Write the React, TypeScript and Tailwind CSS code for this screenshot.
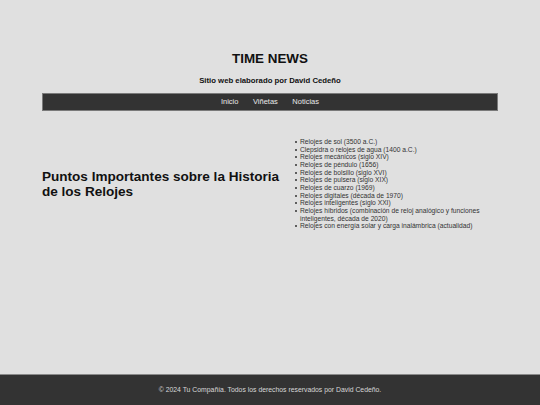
const RELOJES = [
  'Relojes de sol (3500 a.C.)',
  'Clepsidra o relojes de agua (1400 a.C.)',
  'Relojes mecánicos (siglo XIV)',
  'Relojes de péndulo (1656)',
  'Relojes de bolsillo (siglo XVI)',
  'Relojes de pulsera (siglo XIX)',
  'Relojes de cuarzo (1969)',
  'Relojes digitales (década de 1970)',
  'Relojes inteligentes (siglo XXI)',
  'Relojes híbridos (combinación de reloj analógico y funciones inteligentes, década de 2020)',
  'Relojes con energía solar y carga inalámbrica (actualidad)',
]

const NAV = ['Inicio', 'Viñetas', 'Noticias']

export default function App() {
  return (
    <div className="flex h-[405px] w-[540px] flex-col overflow-hidden bg-[#e0e0e0] font-['Liberation_Sans',Arial,sans-serif] text-[#222]">
      {/* Header */}
      <header className="pt-[51px] text-center">
        <h1 className="text-[13.4px] font-bold leading-[15px] text-[#111]">TIME NEWS</h1>
        <p className="mt-[10px] text-[7.75px] font-bold leading-[9px] text-[#111]">Sitio web elaborado por David Cedeño</p>
      </header>

      {/* Nav */}
      <nav className="mx-auto mt-[8px] flex h-[18px] w-[456px] items-center justify-center gap-[14.5px] border border-[#7a7a7a] bg-[#333] text-[7.5px] text-[#e8e8e8]">
        {NAV.map(item => (
          <a key={item} href="#" className="leading-none">{item}</a>
        ))}
      </nav>

      {/* Main */}
      <main className="mx-auto mt-[27px] flex w-[456px] items-center">
        <h2 className="w-[250px] shrink-0 text-[13.55px] font-bold leading-[15.4px] text-[#111]">
          Puntos Importantes sobre la Historia de los Relojes
        </h2>
        <ul className="flex-1 pl-[8px] text-[6.7px] leading-[7.65px] text-[#333]">
          {RELOJES.map(r => (
            <li key={r} className="relative">
              <span className="absolute left-[-5px] top-[3px] h-[2px] w-[2px] rounded-full bg-[#333]" />
              {r}
            </li>
          ))}
        </ul>
      </main>

      {/* Footer */}
      <footer className="mt-auto flex h-[31px] items-center justify-center border-t border-[#8a8a8a] bg-[#333] text-[6.85px] text-[#d8d8d8]">
        © 2024 Tu Compañía. Todos los derechos reservados por David Cedeño.
      </footer>
    </div>
  )
}
